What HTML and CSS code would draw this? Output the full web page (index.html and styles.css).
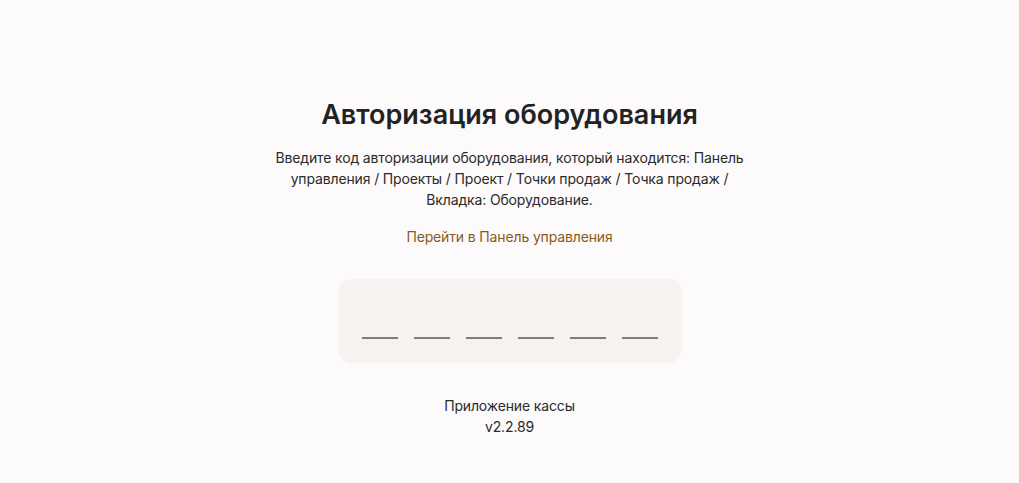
FILE: index.html
```html
<!DOCTYPE html>
<html lang="ru">
<head>
<meta charset="utf-8">
<title>Авторизация оборудования</title>
<link rel="stylesheet" href="styles.css">
</head>
<body>
<main class="page">
  <h1 class="title">Авторизация оборудования</h1>
  <p class="desc">Введите код авторизации оборудования, который находится: Панель управления / Проекты / Проект / Точки продаж / Точка продаж / Вкладка: Оборудование.</p>
  <a class="link" href="#">Перейти в Панель управления</a>
  <div class="code">
    <span class="slot"></span>
    <span class="slot"></span>
    <span class="slot"></span>
    <span class="slot"></span>
    <span class="slot"></span>
    <span class="slot"></span>
  </div>
  <div class="footer">
    <div>Приложение кассы</div>
    <div>v2.2.89</div>
  </div>
</main>
</body>
</html>
```
FILE: styles.css
```css
html, body {
  margin: 0;
  padding: 0;
  background: #fdfafc;
  font-family: Inter, "Noto Sans", sans-serif;
  color: #2a2a2a;
}
.page {
  display: flex;
  flex-direction: column;
  align-items: center;
  padding-top: 99px;
}
.title {
  margin: 0;
  font-size: 27px;
  line-height: 32px;
  font-weight: 600;
  color: #222222;
}
.desc {
  margin: 16px 0 0;
  max-width: 480px;
  text-align: center;
  font-size: 14px;
  line-height: 21px;
  letter-spacing: -0.14px;
  color: #2a2a2a;
}
.link {
  margin-top: 16px;
  font-size: 14px;
  line-height: 21px;
  letter-spacing: -0.14px;
  color: #8a5a18;
  text-decoration: none;
}
.code {
  margin-top: 32px;
  box-sizing: border-box;
  width: 344px;
  height: 84px;
  padding: 0 24px 24px;
  background: #f6f2f0;
  border-radius: 14px;
  display: flex;
  align-items: flex-end;
  gap: 16px;
}
.slot {
  width: 36px;
  height: 2px;
  background: #877a6e;
}
.footer {
  margin-top: 32px;
  text-align: center;
  font-size: 14px;
  line-height: 21px;
  letter-spacing: -0.14px;
  color: #2a2a2a;
}
```
